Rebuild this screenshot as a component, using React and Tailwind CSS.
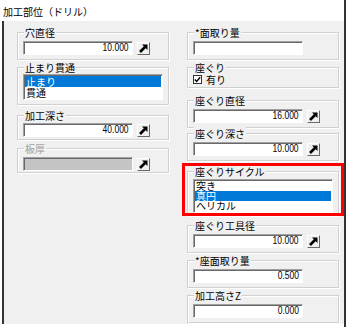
import React from "react";

const jp = "font-['Noto_Sans_CJK_JP','Noto_Sans',sans-serif]";

function ArrowButton() {
  return (
    <div className="w-[13px] h-[13px] shrink-0 bg-[#f0f0f0] border border-t-white border-l-white border-r-[#696969] border-b-[#696969] flex items-center justify-center">
      <svg width="9" height="9" viewBox="0 0 9 9">
        <path d="M1 8 L6 3" stroke="#000" strokeWidth="2.6" />
        <polygon points="3,0.5 8.5,0.5 8.5,6" fill="#000" />
      </svg>
    </div>
  );
}

function TextBox({ value = "", disabled = false }) {
  return (
    <div
      className={`w-[110px] h-[14px] border border-t-[#a0a0a0] border-l-[#a0a0a0] border-r-white border-b-white shadow-[inset_1px_1px_0_#696969] flex items-center justify-end pr-[3px] ${
        disabled ? "bg-[#c4c4c4]" : "bg-white"
      }`}
    >
      <span className="text-[10px] leading-none font-['Liberation_Sans',sans-serif] scale-x-[0.85] origin-right text-black">
        {value}
      </span>
    </div>
  );
}

function ListBox({ items, selected, itemH = "h-[11px] leading-[11px]" }) {
  return (
    <div className="w-[140px] border border-t-[#a0a0a0] border-l-[#a0a0a0] border-r-white border-b-white shadow-[inset_1px_1px_0_#696969] bg-white py-[1px]">
      {items.map((it, i) => (
        <div
          key={it}
          className={`${itemH} mx-[1px] pl-[1px] text-[10px] ${
            i === selected ? "bg-[#0078d7] text-white" : "text-black"
          }`}
        >
          {it}
        </div>
      ))}
    </div>
  );
}

function Group({ label, children, className = "", disabled = false }) {
  return (
    <div
      className={`border border-[#d0d0d0] shadow-[inset_1px_1px_0_#fff,1px_1px_0_#fff] px-[5px] ${className}`}
    >
      <div
        className={`-mt-[7px] ml-[1px] px-[1px] w-fit bg-[#f0f0f0] text-[10px] leading-[13px] ${
          disabled ? "text-[#a0a0a0]" : "text-black"
        }`}
      >
        {label}
      </div>
      {children}
    </div>
  );
}

function ValueGroup({ label, value, arrow = true, disabled = false, className = "pb-[4px]", rowClass = "mt-[2px]" }) {
  return (
    <Group label={label} disabled={disabled} className={className}>
      <div className={`${rowClass} flex items-center gap-[4px]`}>
        <TextBox value={value} disabled={disabled} />
        {arrow && <ArrowButton />}
      </div>
    </Group>
  );
}

export default function App() {
  return (
    <div className={`w-[346px] h-[327px] bg-white border-r-2 border-[#333] flex flex-col ${jp}`}>
      <div className="h-[21px] pl-[3px] pt-[5px] text-[10px] leading-[13px] text-black">
        加工部位（ドリル）
      </div>
      <div className="relative h-[303px] ml-[2px] border-l-2 border-[#333] bg-[#f0f0f0] flex pl-[13px] pt-[11px] gap-[18px]">
        {/* left column */}
        <div className="w-[152px] flex flex-col">
          <ValueGroup label="穴直径" value="10.000" />
          <Group label="止まり貫通" className="mt-[7px] pb-[4px]">
            <ListBox items={["止まり", "貫通"]} selected={0} />
          </Group>
          <ValueGroup label="加工深さ" value="40.000" className="mt-[10px] pb-[2px]" rowClass="mt-[1px]" />
          <ValueGroup label="板厚" value="" disabled className="mt-[8px] pb-[1px]" />
        </div>

        {/* right column */}
        <div className="w-[152px] flex flex-col">
          <ValueGroup label="*面取り量" value="" arrow={false} />
          <Group label="座ぐり" className="mt-[7px] pb-[3px]">
            <label className="mt-[1px] h-[9px] flex items-center gap-[4px] text-[10px] leading-[11px]">
              <span className="w-[9px] h-[9px] bg-white border border-[#333] flex items-center justify-center">
                <svg width="7" height="7" viewBox="0 0 7 7">
                  <path d="M0.8 3.4 L2.7 5.4 L6.2 1.2" stroke="#000" strokeWidth="1.4" fill="none" />
                </svg>
              </span>
              有り
            </label>
          </Group>
          <ValueGroup label="座ぐり直径" value="16.000" className="mt-[12px] pb-[4px]" />
          <ValueGroup label="座ぐり深さ" value="10.000" className="mt-[5px] pb-[4px]" />
          <Group label="座ぐりサイクル" className="mt-[10px] pb-[2px]">
            <div className="mt-[1px]">
              <ListBox items={["突き", "真円", "ヘリカル"]} selected={1} itemH="h-[10px] leading-[10px]" />
            </div>
          </Group>
          <ValueGroup label="座ぐり工具径" value="10.000" className="mt-[9px] pb-[4px]" />
          <ValueGroup label="*座面取り量" value="0.500" arrow={false} className="mt-[7px] pb-[4px]" />
          <ValueGroup label="加工高さZ" value="0.000" arrow={false} className="mt-[7px] pb-[4px]" />
        </div>

        {/* red highlight annotation */}
        <div className="absolute left-[178px] top-[142px] w-[162px] h-[53px] border-[3px] border-[#ff0000] pointer-events-none" />
      </div>
    </div>
  );
}
